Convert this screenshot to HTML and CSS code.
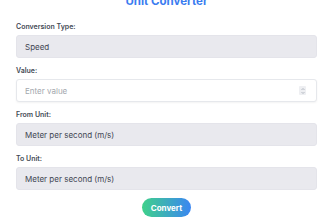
FILE: index.html
```html
<!DOCTYPE html>
<html lang="en">
<head>
    <meta charset="UTF-8">
    <meta name="viewport" content="width=device-width, initial-scale=1.0">
    <title>Unit Converter</title>
    <link rel="stylesheet" href="styles.css">
</head>
<body>
    <div class="converter">
        <h1 class="title">Unit Converter</h1>

        <div class="field-group">
            <label class="field-label" for="type">Conversion Type:</label>
            <select class="field select" id="type">
                <option>Speed</option>
            </select>
        </div>

        <div class="field-group">
            <label class="field-label" for="value">Value:</label>
            <div class="number-wrap">
                <input class="field input" id="value" type="text" placeholder="Enter value">
                <span class="spinner">
                    <svg width="6" height="8" viewBox="0 0 6 8">
                        <path d="M1.5 3 L3 1.5 L4.5 3" fill="none" stroke="#9ca3af" stroke-width="0.7"/>
                        <path d="M1.5 5 L3 6.5 L4.5 5" fill="none" stroke="#9ca3af" stroke-width="0.7"/>
                    </svg>
                </span>
            </div>
        </div>

        <div class="field-group">
            <label class="field-label" for="from">From Unit:</label>
            <select class="field select" id="from">
                <option>Meter per second (m/s)</option>
            </select>
        </div>

        <div class="field-group">
            <label class="field-label" for="to">To Unit:</label>
            <select class="field select" id="to">
                <option>Meter per second (m/s)</option>
            </select>
        </div>

        <div class="actions">
            <button class="convert-btn">Convert</button>
        </div>
    </div>
</body>
</html>
```

FILE: styles.css
```css
* {
    margin: 0;
    padding: 0;
    box-sizing: border-box;
}

body {
    font-family: Inter, 'Liberation Sans', sans-serif;
    background: #ffffff;
    color: #374151;
    overflow: hidden;
}

.converter {
    padding: 0 16px;
}

.title {
    color: #3b7cf0;
    font-size: 11.5px;
    font-weight: 700;
    line-height: 14px;
    text-align: center;
    margin-top: -6px;
    margin-bottom: 14px;
}

.field-group {
    margin-bottom: 8px;
}

.field-label {
    display: block;
    color: #444a55;
    font-size: 7px;
    font-weight: 600;
    line-height: 9px;
    margin-bottom: 4px;
}

.field {
    display: block;
    width: 100%;
    height: 23px;
    padding: 0 8px;
    font-family: Inter, 'Liberation Sans', sans-serif;
    font-size: 8px;
    color: #414652;
    border-radius: 3px;
    outline: none;
}

.select {
    appearance: none;
    -webkit-appearance: none;
    background: #e9e9ee;
    border: 1px solid #e4e4ea;
}

.input {
    background: #ffffff;
    border: 1px solid #e6e8ec;
    box-shadow: 0 1px 2px rgba(0, 0, 0, 0.05);
}

.input::placeholder {
    color: #a3a7ae;
}

.number-wrap {
    position: relative;
}

.spinner {
    position: absolute;
    right: 11px;
    top: 7px;
    width: 7px;
    height: 9px;
    background: #eeeff2;
    border-radius: 1px;
    display: flex;
    align-items: center;
    justify-content: center;
}

.actions {
    display: flex;
    justify-content: center;
}

.convert-btn {
    height: 19px;
    padding: 0 9px;
    border: none;
    border-radius: 10px;
    background: linear-gradient(90deg, #3fd18a, #3a86f2);
    color: #ffffff;
    font-family: Inter, 'Liberation Sans', sans-serif;
    font-size: 8px;
    font-weight: 700;
}
```
